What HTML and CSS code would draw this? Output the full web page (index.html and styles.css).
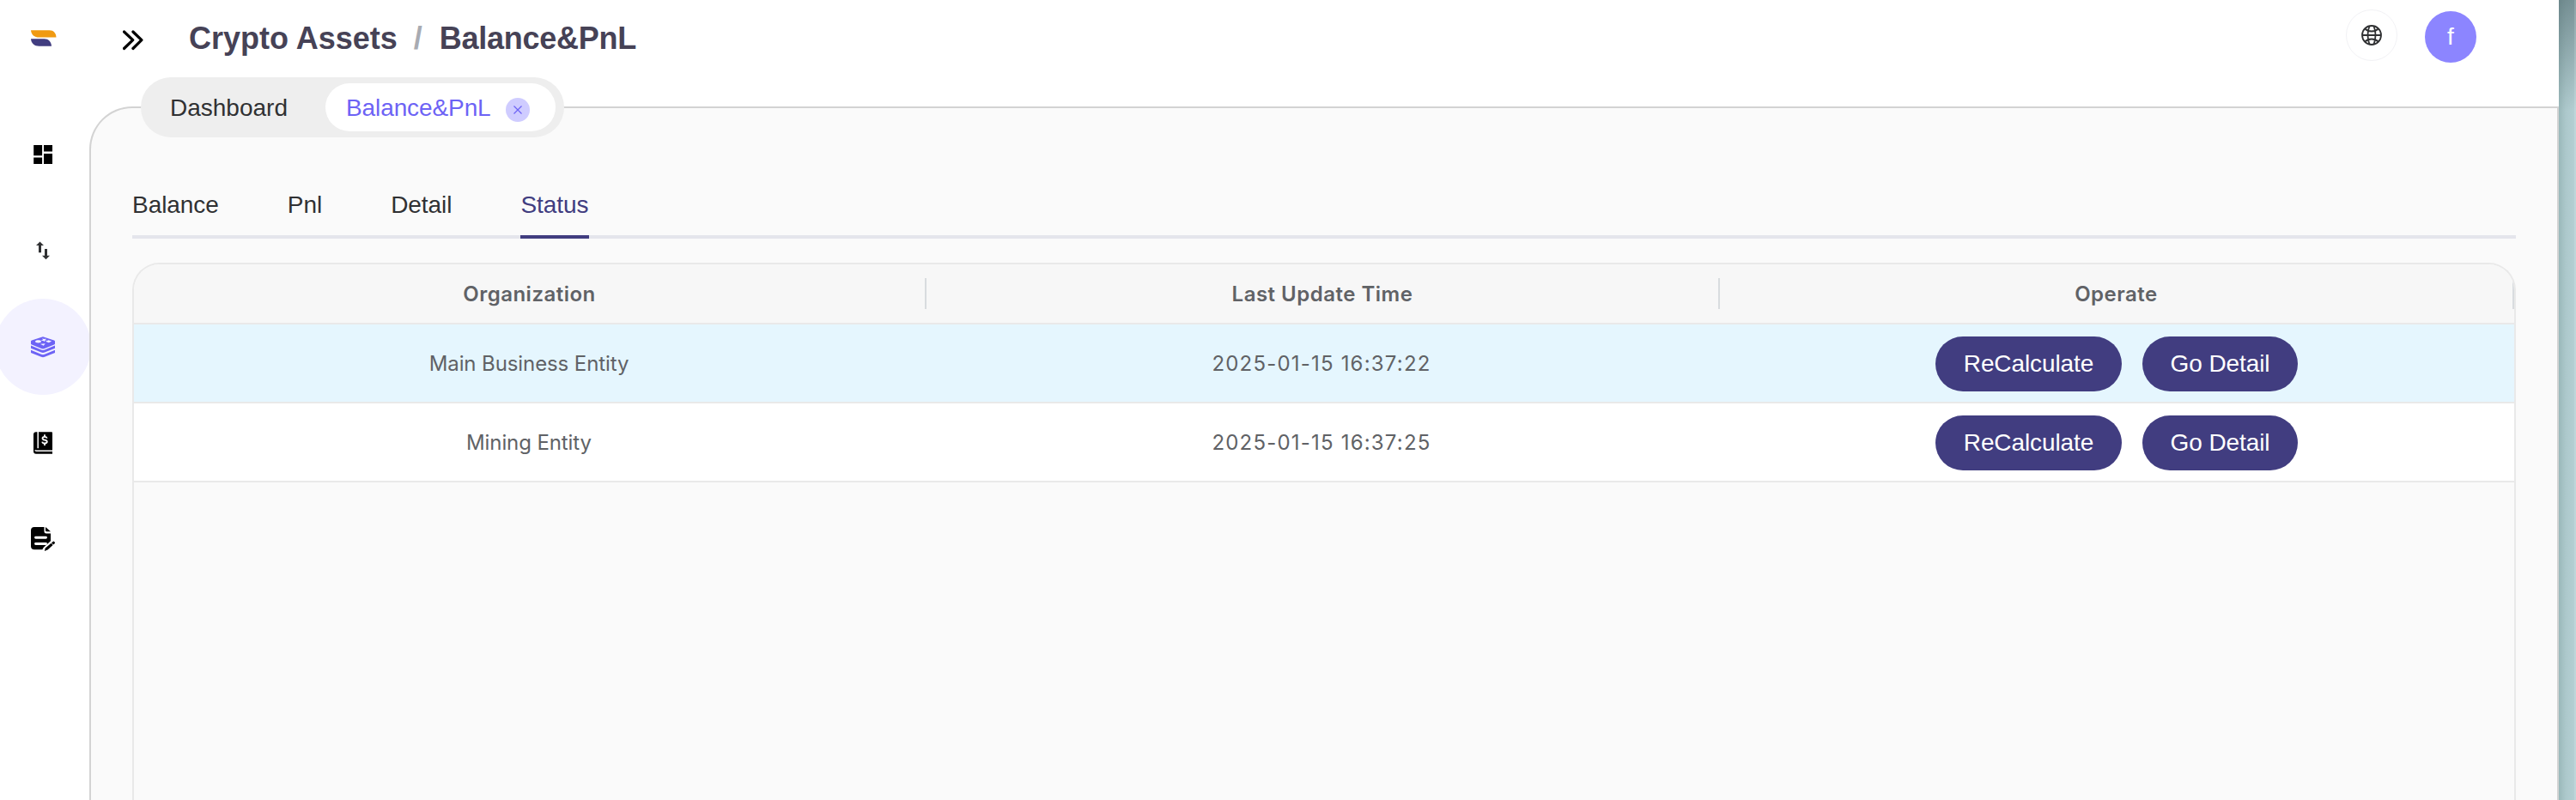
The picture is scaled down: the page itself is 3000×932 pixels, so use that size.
FILE: index.html
```html
<!DOCTYPE html>
<html lang="en">
<head>
<meta charset="utf-8">
<title>Balance&amp;PnL</title>
<link rel="stylesheet" href="styles.css">
</head>
<body>
<div class="app">
  <aside class="sidebar">
    <div class="logo">
      <svg width="30" height="20" viewBox="0 0 30 20"><path fill="#f09a12" d="M0 .2h21.500c5 0 7.600 3.200 8 8.300H9.500C4 8.500.5 5.500 0 .2z"/><path fill="#413d80" d="M0 10.200h15.500c5 0 8 3.200 8.500 8.500H9.500C4 18.700.5 15.700 0 10.200z"/></svg>
    </div>
    <nav class="menu">
      <a class="menu-item"><svg width="28" height="28" viewBox="0 0 28 28"><path d="M3.200 3h9.900v12.200H3.200zM15 3h10v7.600H15zM15 13h10v12H15zM3.200 17.400h9.900V25H3.200z"/></svg></a>
      <a class="menu-item"><svg width="28" height="28" viewBox="0 0 28 28" fill="#303133"><path d="M10.500 3.500 15 8h-3v8.300H9V8H6zM17.500 24.300 13 19.800h3V12h3v7.800h3z"/></svg></a>
      <a class="menu-item active"><svg width="28" height="28" viewBox="0 0 28 28" fill="#6d63f5"><path fill-rule="evenodd" d="M14 2.200 27 6.500q1 .4 1 1V10.500q0 .6-1 1l-11 4.600q-2 .9-4 0L1 11.500q-1-.4-1-1V7.500q0-.6 1-1zM13.200 4.300l.8 1.500-2.500.9 3 .2 1.200 1.200.7-1.500 2.600-.5-2.200-.6.6-1-2.200.5zM8.500 6.200C6.400 6.200 5 6.900 5 7.800s1.400 1.600 3.500 1.600 3.500-.7 3.500-1.600-1.400-1.600-3.500-1.600zM20.500 6.200 17 7.800l3.800 1.500 3.400-1.700zM10.800 10.800l4 1.900 1.900-2.500z"/><path d="M0 12.600l12 5q2 .9 4 0l12-5v3.100l-12 4.800q-2 .9-4 0L0 15.700zM0 17.800l12 4.900q2 .9 4 0l12-4.900v3.200l-12 4.700q-2 .9-4 0L0 21z"/></svg></a>
      <a class="menu-item"><svg width="28" height="28" viewBox="0 0 28 28"><path d="M6 1.300h18q1 0 1 1v24.400H6q-3 0-3-3V4.300q0-3 3-3z"/><path d="M8.200 1v19.200M25.500 23.200H6.500q-1.500 0-1.500-.9" fill="none" stroke="#fff" stroke-width="1.500"/><path d="M16 4.200v3M16 14v3M18.700 8.600q-.4-1.700-2.700-1.700-2.500 0-2.500 1.800 0 1.500 2.600 1.900 2.700.4 2.700 2 0 1.900-2.800 1.900-2.400 0-2.800-1.900" fill="none" stroke="#fff" stroke-width="1.800"/></svg></a>
      <a class="menu-item"><svg width="28" height="28" viewBox="0 0 28 28"><path d="M4 0h11.500v5q0 2.500 2.500 2.500h5v8.700l-8.200 7.600-1.500 2.400H4q-4 0-4-4V4q0-4 4-4z"/><path d="M17 0l6 5.300H18.500Q17 5.300 17 4z"/><path d="M5.500 12.300h12M5.500 19.500h12" stroke="#fff" stroke-width="2.900" stroke-linecap="round"/><path d="M26 16.700q.5-.3 1 .2l.8.900q.5.600 0 1.100l-8.300 7.500-3.700 1.500 1-3.500z" stroke="#fff" stroke-width="1.200" paint-order="stroke"/><path d="M23.400 18.200l2.500 2.700" stroke="#fff" stroke-width=".9"/></svg></a>
    </nav>
  </aside>

  <div class="main">
    <header class="topbar">
      <svg class="expand" width="24" height="24" viewBox="0 0 24 24"><path d="M1.500 2l10.200 9.700L1.500 21.500M11.900 2l10 9.700-10 9.800" fill="none" stroke="#000" stroke-width="3.200" stroke-linecap="round" stroke-linejoin="round"/></svg>
      <h1 class="crumbs"><span>Crypto Assets</span><span class="slash">/</span><span class="crumb-last">Balance&amp;PnL</span></h1>
      <div class="tools">
        <button class="lang" aria-label="Language"><svg width="24" height="24" viewBox="0 0 24 24" fill="none" stroke="#303133" stroke-width="1.800"><circle cx="12" cy="12" r="11"/><path d="M1 12h22M9.500 1.300C7 8 7 16 9.500 22.700M14.500 1.300c2.500 6.700 2.500 14.700 0 21.400M4.200 4.500c4.500 4 11.100 4 15.600 0M4.200 19.500c4.500-4 11.100-4 15.600 0"/></svg></button>
        <div class="avatar">f</div>
      </div>
    </header>

    <div class="panel">
      <div class="page-tabs">
        <span class="page-tab">Dashboard</span>
        <span class="page-tab current">Balance&amp;PnL<span class="close"><svg width="10" height="10" viewBox="0 0 10 10"><path d="M.5.5l9 9M9.500.5l-9 9" stroke="#6d63f5" stroke-width="1.200"/></svg></span></span>
      </div>
      <div class="tabs">
        <span class="tab">Balance</span>
        <span class="tab">Pnl</span>
        <span class="tab">Detail</span>
        <span class="tab selected">Status</span>
      </div>
      <section class="table">
        <div class="row head">
          <div class="cell">Organization</div>
          <div class="cell">Last Update Time</div>
          <div class="cell">Operate</div>
        </div>
        <div class="row hover">
          <div class="cell">Main Business Entity</div>
          <div class="cell date">2025-01-15 16:37:22</div>
          <div class="cell actions"><button class="btn">ReCalculate</button><button class="btn detail">Go Detail</button></div>
        </div>
        <div class="row">
          <div class="cell">Mining Entity</div>
          <div class="cell date">2025-01-15 16:37:25</div>
          <div class="cell actions"><button class="btn">ReCalculate</button><button class="btn detail">Go Detail</button></div>
        </div>
      </section>
    </div>
  </div>
  <div class="desktop"></div>
</div>
</body>
</html>
```
FILE: styles.css
```css
* { box-sizing: border-box; }
body { margin: 0; background: #fff; font-family: "Liberation Sans", Arial, sans-serif; font-size: 28px; color: #303133; }
button { font: inherit; border: 0; padding: 0; }
svg { display: block; }
.app { display: flex; width: 3000px; height: 932px; overflow: hidden; }

.sidebar { width: 104px; flex: none; overflow: hidden; }
.logo { height: 124px; padding: 35px 0 0 36px; }
.menu { display: flex; flex-direction: column; width: 112px; margin-left: -6px; }
.menu-item { height: 112px; display: flex; align-items: center; justify-content: center; }
.menu-item.active { background: #f3f2ff; border-radius: 50%; }

.main { width: 2876px; flex: none; display: flex; flex-direction: column; }
.topbar { height: 124px; flex: none; display: flex; align-items: flex-start; padding-left: 38px; }
.expand { margin-top: 35px; flex: none; margin-left: 1px; }
.crumbs { margin: 24px 0 0 53px; display: flex; font-size: 36px; line-height: 42px; font-weight: 700; color: #464256; }
.slash { width: 16px; margin: 0 17px 0 16px; text-align: center; font-weight: 700; color: #a8abb2; }
.crumb-last { letter-spacing: -.25px; }
.tools { margin-left: auto; margin-right: 96px; display: flex; gap: 32px; padding-top: 11px; }
.lang { width: 60px; height: 60px; border: 1px solid #f2f2f5; border-radius: 50%; background: #fff; display: flex; align-items: center; justify-content: center; }
.avatar { width: 60px; height: 60px; margin-top: 2px; border-radius: 50%; background: #8c85ff; color: #fff; text-align: center; line-height: 60px; }

.panel { flex: 1; display: flex; flex-direction: column; border: 2px solid #d3d3d3; border-bottom: 0; border-top-left-radius: 50px; background: #fafafa; padding: 0 48px; }
.page-tabs { align-self: flex-start; display: flex; align-items: center; height: 70px; margin: -36px 0 0 10px; padding: 0 10px 0 34px; border-radius: 35px; background: #eee; }
.page-tab { width: 181px; line-height: 57px; white-space: nowrap; }
.page-tab.current { width: 268px; height: 56px; padding-left: 24px; border-radius: 28px; background: #fff; color: #6d63f5; display: flex; letter-spacing: -.1px; }
.close { width: 28px; height: 28px; margin: 17px 0 0 17px; border-radius: 50%; background: #cfccff; display: flex; align-items: center; justify-content: center; }

.tabs { display: flex; gap: 80px; height: 64px; margin-top: 54px; border-bottom: 4px solid #e4e5ec; }
.tab { height: 64px; line-height: 50px; border-bottom: 4px solid transparent; letter-spacing: -.05px; }
.tab.selected { color: #413d80; border-bottom-color: #413d80; }

.table { flex: 1; margin-top: 28px; border: 2px solid #e9e9e9; border-bottom: 0; border-radius: 32px 32px 0 0; overflow: hidden; font-family: Inter, sans-serif; font-size: 24px; color: #606266; }
.row { display: grid; grid-template-columns: 920px 926px 1fr; height: 92px; padding-top: 2px; align-items: center; border-bottom: 2px solid #e9e9e9; background: #fff; }
.row.head { grid-template-columns: 923px 924px 1fr; height: 70px; padding-top: 0; background: #f7f7f7; font-weight: 600; }
.row.hover { background: #e5f6fe; }
.cell { text-align: center; line-height: 38px; letter-spacing: -.1px; }
.date { letter-spacing: 1.2px; }
.head .cell { height: 36px; border-right: 2px solid #d8dcdf; letter-spacing: .5px; }
.actions { display: flex; justify-content: center; gap: 24px; font-family: "Liberation Sans", Arial, sans-serif; }
.btn { width: 217px; height: 64px; border-radius: 32px; background: #413d80; color: #fff; font-size: 28px; line-height: 64px; letter-spacing: -.1px; }
.btn.detail { width: 181px; }

.desktop { flex: 1; background:
  linear-gradient(to right, transparent 18px, rgba(255,255,255,.15) 18px),
  linear-gradient(to bottom, rgba(60,85,90,.5), rgba(60,85,90,0) 130px),
  linear-gradient(to right, #9ab8ba, #acc8cb 8px, #b4cfd3 18px); }
```
